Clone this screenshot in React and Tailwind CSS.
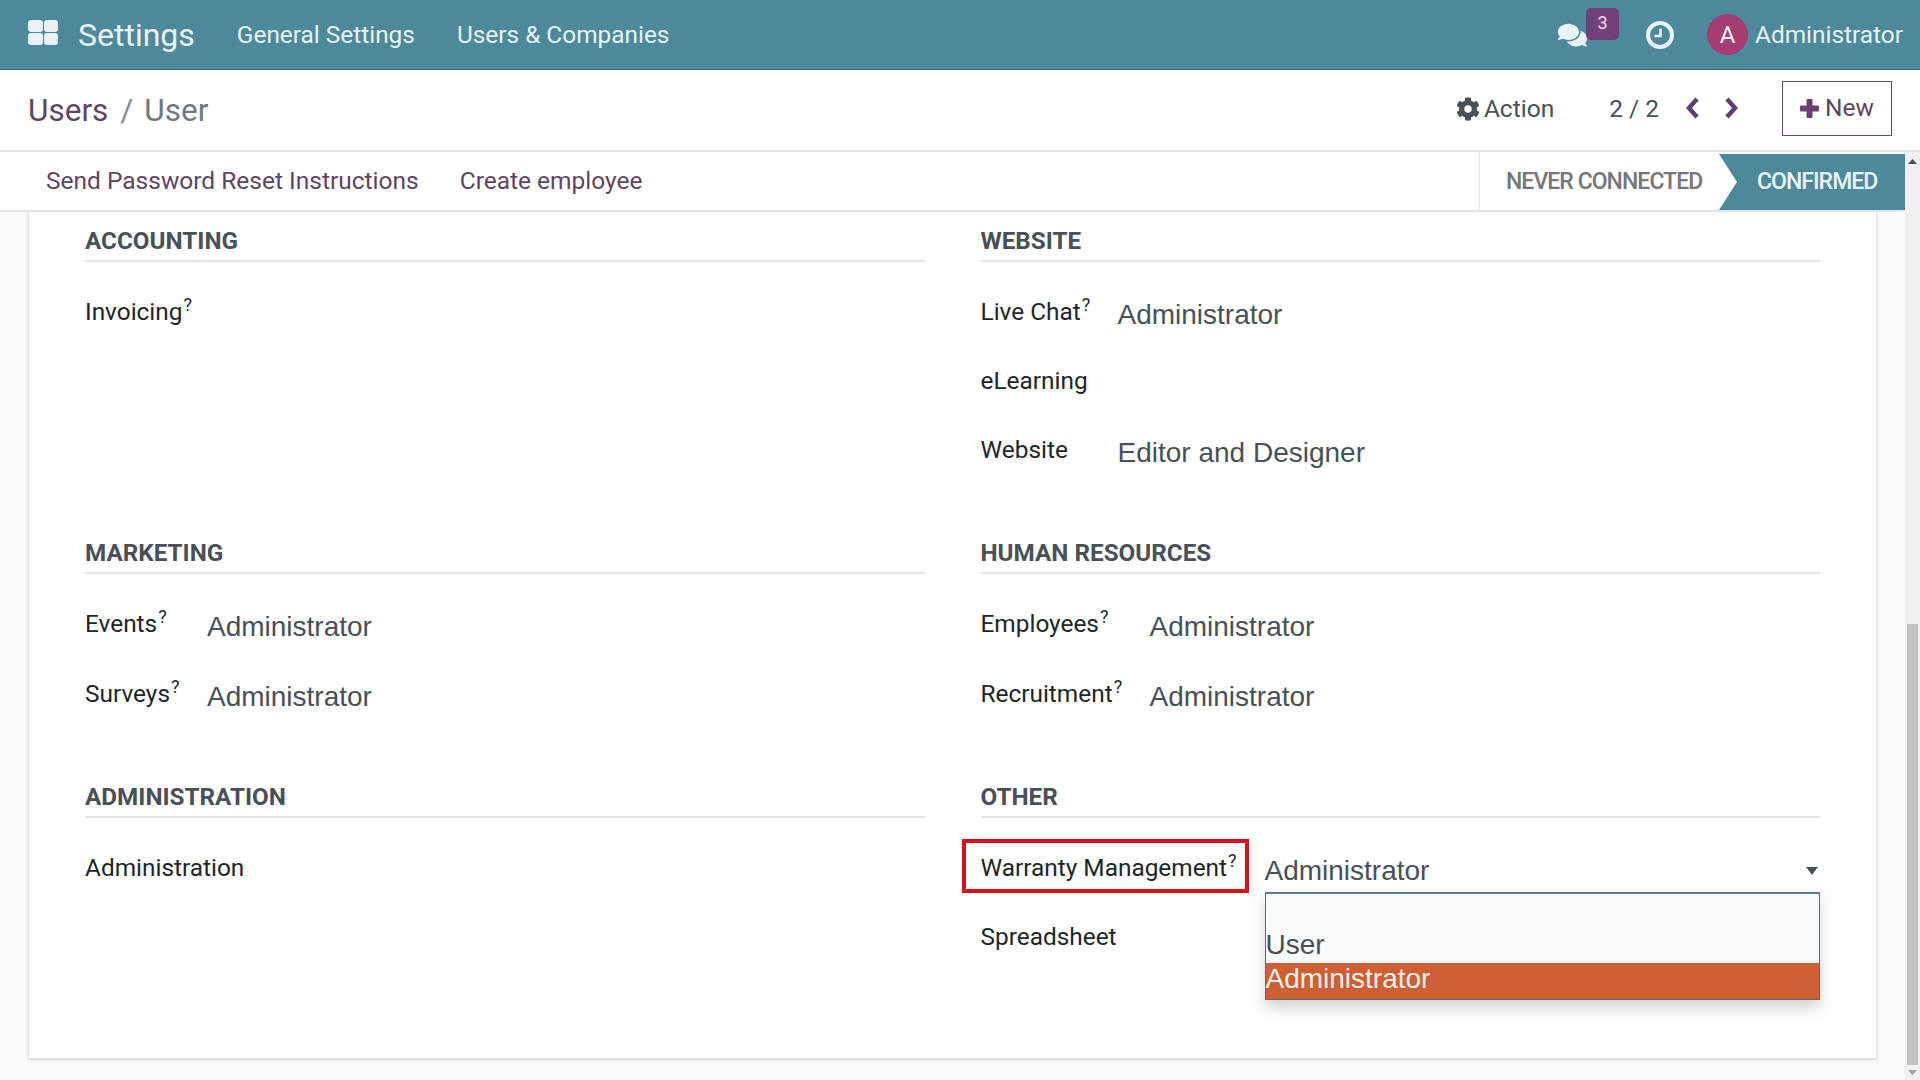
import React from 'react';
import { FaComments, FaCog } from 'react-icons/fa';

const roboto = "font-['Roboto',sans-serif]";

function SectionTitle({ children }) {
  return (
    <div className="h-[44px] pt-[4px] border-b-2 border-[#e4e6e8] flex items-center text-[24.25px] font-bold text-[#495057]">
      {children}
    </div>
  );
}

function Section({ title, labelWidth, rowHeight = 'h-[69.5px]', rows }) {
  return (
    <div>
      <SectionTitle>{title}</SectionTitle>
      <div className="pt-[32px]">
        {rows.map((row) => (
          <div key={row.label} className={`${rowHeight} flex items-start`}>
            <div className={`${labelWidth} shrink-0 text-[24.4px] leading-[34px] pt-[1px] text-[#212529] whitespace-nowrap`}>
              {row.label}
              {row.help && <sup className="text-[18px] ml-[1px]">?</sup>}
            </div>
            {row.value && (
              <div className="font-['Liberation_Sans',sans-serif] text-[28px] leading-[40px] pt-[1px] text-[#495057]">{row.value}</div>
            )}
          </div>
        ))}
      </div>
    </div>
  );
}

function WarrantySelect() {
  return (
    <div className="relative flex-1 h-[41px] flex items-center justify-between font-['Liberation_Sans',sans-serif] text-[28px] text-[#495057]">
      <span>Administrator</span>
      <svg width="12" height="8" viewBox="0 0 12 8" className="mr-[2px]"><polygon points="0,0 12,0 6,8" fill="#495057" /></svg>
      <div className="absolute left-0 right-0 top-[42px] bg-[#f8f9fa] border border-[#5f6b72] border-t-2 border-t-[#5d7f8a] shadow-[0_8px_14px_rgba(0,0,0,0.18)] leading-[34px] z-10">
        <div className="h-[33px]"></div>
        <div className="h-[36px] flex items-center">User</div>
        <div className="h-[36px] flex items-center pb-[5px] bg-[#cd5f33] text-[#fdf1ea]">Administrator</div>
      </div>
    </div>
  );
}

export default function App() {
  return (
    <div className={`${roboto} w-[1920px] h-[1080px] overflow-hidden flex flex-col bg-white`}>
      {/* top navbar */}
      <header className="h-[70px] shrink-0 bg-[#4c8a9b] border-b border-[#3b5f6a] flex items-center text-[#e9f3f5]">
        <div className="ml-[28px] mb-[5px] grid grid-cols-2 gap-[1px] w-[30px]">
          <span className="h-[12px] bg-[#e9f3f5] rounded-[3px]"></span>
          <span className="h-[12px] bg-[#e9f3f5] rounded-[3px]"></span>
          <span className="h-[12px] bg-[#e9f3f5] rounded-[3px]"></span>
          <span className="h-[12px] bg-[#e9f3f5] rounded-[3px]"></span>
        </div>
        <div className="ml-[20px] pt-[1px] text-[32px]">Settings</div>
        <div className="ml-[42px] pt-[1px] text-[24.4px]">General Settings</div>
        <div className="ml-[42px] pt-[1px] text-[24.4px]">Users &amp; Companies</div>
        <div className="ml-auto flex items-center h-full">
          <div className="relative w-[31px] h-[26px] mr-[1px] flex items-center">
            <FaComments className="w-[31px] h-[26px]" />
            <span className="absolute left-[29px] top-[-14px] w-[33px] h-[32px] rounded-[5px] bg-[#71417c] flex items-center justify-center text-[18px] pb-[2px] text-[#f0d9ee]">3</span>
          </div>
          <svg width="28" height="28" viewBox="0 0 28 28" className="ml-[57px]" fill="none" stroke="#e9f3f5">
            <circle cx="14" cy="14" r="12" strokeWidth="4" />
            <path d="M14.5 7.5v7.5h-6" strokeWidth="2.5" />
          </svg>
          <span className="ml-[33px] w-[41px] h-[41px] rounded-full bg-[#a63d72] flex items-center justify-center text-[24px]">A</span>
          <span className="ml-[7px] mr-[17px] pt-[1px] text-[24.4px]">Administrator</span>
        </div>
      </header>

      {/* breadcrumb and pager */}
      <div className="h-[82px] shrink-0 border-b-2 border-[#e3e5e7] flex items-center text-[#495057]">
        <div className="ml-[28px] pt-[1px] text-[31.5px] text-[#5f4563]">Users</div>
        <div className="ml-[12px] pt-[1px] text-[31.5px] text-[#858b91]">/</div>
        <div className="ml-[11px] pt-[1px] text-[31.5px] text-[#70777e]">User</div>
        <div className="ml-auto flex items-center">
          <FaCog className="w-[24px] h-[24px] mb-[2px] text-[#495057]" />
          <span className="ml-[4px] mb-[2px] text-[24.5px]">Action</span>
          <span className="ml-[55px] mb-[2px] text-[24.5px]">2 / 2</span>
          <svg width="14" height="22" viewBox="0 0 14 22" className="ml-[26px] mb-[4px]" fill="none" stroke="#5f3f72" strokeWidth="4.5">
            <path d="M12 2 4 11l8 9" />
          </svg>
          <svg width="14" height="22" viewBox="0 0 14 22" className="ml-[26px] mb-[4px]" fill="none" stroke="#5f3f72" strokeWidth="4.5">
            <path d="M2 2l8 9-8 9" />
          </svg>
          <button className="ml-[43px] mr-[28px] mb-[3px] w-[110px] h-[55px] border border-[#6b4a70] flex items-center justify-center gap-[6px] text-[24.5px] text-[#5f4563]">
            <svg width="19" height="19" viewBox="0 0 19 19" fill="#6b3f72">
              <rect x="6.5" y="0" width="6" height="19" rx="1" />
              <rect x="0" y="6.5" width="19" height="6" rx="1" />
            </svg>
            New
          </button>
        </div>
      </div>

      <div className="flex-1 flex min-h-0">
        <div className="flex-1 flex flex-col min-w-0">
          {/* action buttons and statusbar */}
          <div className="h-[60px] shrink-0 border-b-2 border-[#e3e5e7] flex text-[24.5px] text-[#5f4563]">
            <div className="ml-[46px] flex items-center gap-[41px]">
              <span>Send Password Reset Instructions</span>
              <span>Create employee</span>
            </div>
            <div className="ml-auto flex h-full">
              <div className="w-[240px] border-l border-[#e3e5e7] flex items-center pl-[26px] pt-[2px] text-[23px] font-medium tracking-[-0.95px] text-[#777]">
                NEVER CONNECTED
              </div>
              <div className="w-[186px] mt-[2px] bg-[#4c8a9b] flex items-center pl-[38px] text-[23px] font-medium tracking-[-0.95px] text-[#e9f3f5] [clip-path:polygon(0_0,100%_0,100%_100%,0_100%,18px_50%)]">
                CONFIRMED
              </div>
            </div>
          </div>

          {/* form sheet */}
          <div className="flex-1 bg-[#f8f9fa] px-[28px] min-h-0">
            <div className="h-[847px] bg-white border border-t-0 border-[#e0e2e4] shadow-sm px-[56px] pt-[6px] grid grid-cols-2 gap-x-[56px] content-start">
              <div className="mb-[29px]">
                <Section title="ACCOUNTING" labelWidth="w-[137px]" rows={[{ label: 'Invoicing', help: true }]} />
              </div>
              <div className="mb-[29px]">
                <Section
                  title="WEBSITE"
                  labelWidth="w-[137px]"
                  rowHeight="h-[69px]"
                  rows={[
                    { label: 'Live Chat', help: true, value: 'Administrator' },
                    { label: 'eLearning' },
                    { label: 'Website', value: 'Editor and Designer' },
                  ]}
                />
              </div>
              <div className="mb-[29px]">
                <Section
                  title="MARKETING"
                  labelWidth="w-[122px]"
                  rows={[
                    { label: 'Events', help: true, value: 'Administrator' },
                    { label: 'Surveys', help: true, value: 'Administrator' },
                  ]}
                />
              </div>
              <div className="mb-[29px]">
                <Section
                  title="HUMAN RESOURCES"
                  labelWidth="w-[169px]"
                  rows={[
                    { label: 'Employees', help: true, value: 'Administrator' },
                    { label: 'Recruitment', help: true, value: 'Administrator' },
                  ]}
                />
              </div>
              <div>
                <Section title="ADMINISTRATION" labelWidth="w-[122px]" rows={[{ label: 'Administration' }]} />
              </div>
              <div>
                <SectionTitle>OTHER</SectionTitle>
                <div className="pt-[32px]">
                  <div className="h-[69px] flex items-start">
                    <div className="relative w-[284px] shrink-0 text-[24.4px] leading-[34px] pt-[1px] text-[#212529] whitespace-nowrap">
                      Warranty Management<sup className="text-[18px] ml-[1px]">?</sup>
                      <span className="absolute left-[-19px] top-[-11px] w-[287px] h-[54px] border-[4px] border-[#d9101a]"></span>
                    </div>
                    <WarrantySelect />
                  </div>
                  <div className="h-[69px] text-[24.4px] leading-[34px] pt-[1px] text-[#212529]">Spreadsheet</div>
                </div>
              </div>
            </div>
          </div>
        </div>

        {/* scrollbar */}
        <div className="w-[15px] shrink-0 bg-[#f1f1f1] flex flex-col items-center text-[#505050] pt-[7px] pb-[5px]">
          <svg width="9" height="5" viewBox="0 0 9 5"><polygon points="0,5 9,5 4.5,0" fill="currentColor" /></svg>
          <div className="w-[11px] h-[441px] mt-auto bg-[#c1c1c1]"></div>
          <svg width="9" height="5" viewBox="0 0 9 5" className="mt-[5px]"><polygon points="0,0 9,0 4.5,5" fill="#a3a3a3" /></svg>
        </div>
      </div>
    </div>
  );
}
